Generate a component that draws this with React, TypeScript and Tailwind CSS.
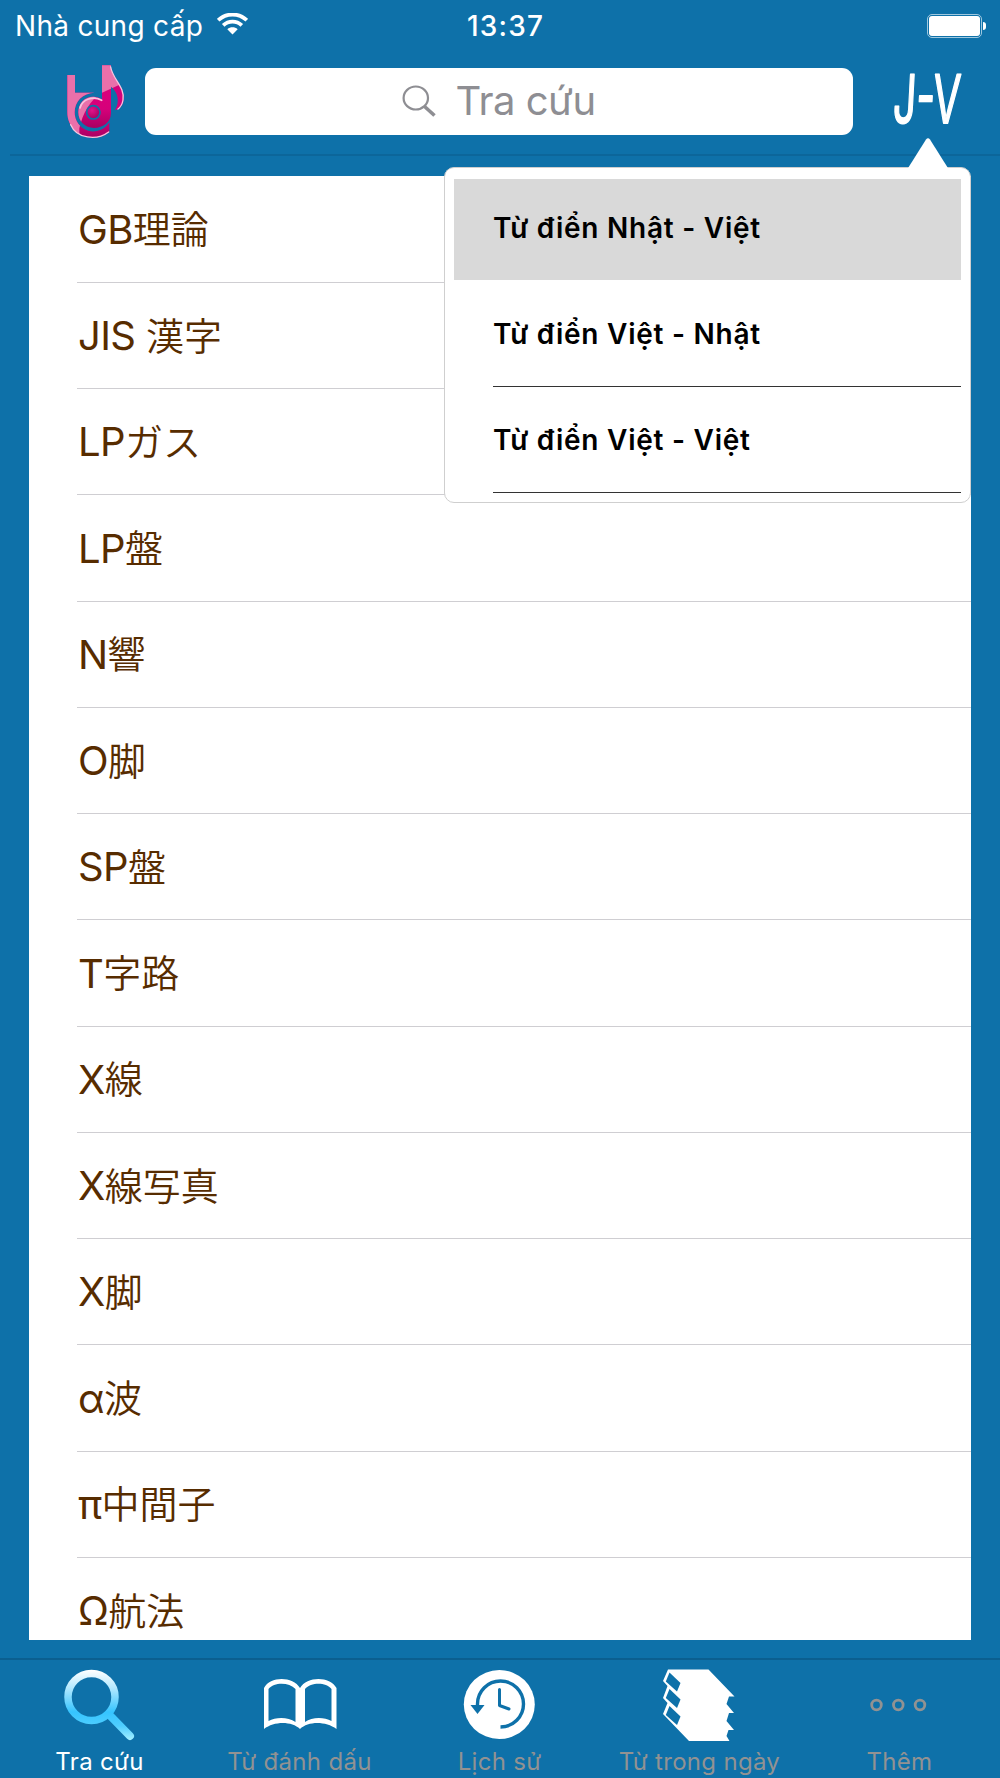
import type { ReactNode } from "react";

type Entry = { latin: string; kanji: string };

const entries: Entry[] = [
  { latin: "GB", kanji: "理論" },
  { latin: "JIS ", kanji: "漢字" },
  { latin: "LP", kanji: "ガス" },
  { latin: "LP", kanji: "盤" },
  { latin: "N", kanji: "響" },
  { latin: "O", kanji: "脚" },
  { latin: "SP", kanji: "盤" },
  { latin: "T", kanji: "字路" },
  { latin: "X", kanji: "線" },
  { latin: "X", kanji: "線写真" },
  { latin: "X", kanji: "脚" },
  { latin: "α", kanji: "波" },
  { latin: "π", kanji: "中間子" },
  { latin: "Ω", kanji: "航法" },
];

const dictionaries = [
  "Từ điển Nhật - Việt",
  "Từ điển Việt - Nhật",
  "Từ điển Việt - Việt",
];

function StatusBar() {
  return (
    <div className="flex h-[51px] items-center text-[28px] leading-none text-white">
      <div className="flex flex-1 items-center pl-[15px]">
        <span className="tracking-[0.3px]">Nhà cung cấp</span>
        <svg className="ml-[14px] -mt-1" width="31" height="22" viewBox="0 0 31 22" aria-hidden="true">
          <g fill="none" stroke="#fff" strokeWidth="3.8">
            <path d="M1.2 7.2C9.2-0.4 21.8-0.4 29.8 7.2" />
            <path d="M6.2 12.3C11.5 7.3 19.5 7.3 24.8 12.3" />
          </g>
          <path d="M15.5 21.5L10.3 16.2C13.3 13.7 17.7 13.7 20.7 16.2Z" fill="#fff" />
        </svg>
      </div>
      <span className="pl-[10px] font-[550] tracking-[1.2px]">13:37</span>
      <div className="flex flex-1 items-center justify-end pr-[14px]">
        <div className="h-[24px] w-[55px] rounded-[5px] border border-[#9fc8df] p-px">
          <div className="h-full rounded-[3px] bg-white" />
        </div>
        <div className="ml-px h-2 w-[3px] rounded-r-full bg-white" />
      </div>
    </div>
  );
}

function Logo() {
  return (
    <svg width="90" height="100" viewBox="0 0 270 300" aria-hidden="true">
      <defs>
        <linearGradient id="lower" x1="0" y1="0" x2="0" y2="1">
          <stop offset="0" stopColor="#e0007f" />
          <stop offset="0.7" stopColor="#d6007a" />
          <stop offset="1" stopColor="#a80062" />
        </linearGradient>
        <radialGradient id="ball" cx="0.4" cy="0.35" r="0.7">
          <stop offset="0" stopColor="#e0148a" />
          <stop offset="1" stopColor="#a3005f" />
        </radialGradient>
        <clipPath id="shine">
          <path d="M40 30H240V90L156 128C120 150 98 190 88 235L88 280H40Z" />
        </clipPath>
      </defs>
      <path d="M52 75H75V128H134C98 129 74 154 74 187A56 56 0 0 0 178 217V246C165 257 150 263 130 263C85 263 52 230 52 187Z" fill="url(#lower)" />
      <path d="M156 46H183V190C183 216 160 234 132 234C105 234 85 214 85 187C85 160 104 140 130 140C140 140 149 143 156 148Z" fill="url(#lower)" />
      <path d="M182 48C185 86 223 110 221 148C219 166 209 180 195 180C210 156 204 126 183 110Z" fill="#d3007a" />
      <g clipPath="url(#shine)" fill="#ea70aa">
        <path d="M52 75H75V128H134C98 129 74 154 74 187A56 56 0 0 0 178 217V246C165 257 150 263 130 263C85 263 52 230 52 187Z" />
        <path d="M156 46H183V190C183 216 160 234 132 234C105 234 85 214 85 187C85 160 104 140 130 140C140 140 149 143 156 148Z" />
        <path d="M182 48C185 86 223 110 221 148C219 166 209 180 195 180C210 156 204 126 183 110Z" />
      </g>
      <g fill="none" stroke="#f8c4de" strokeLinecap="round">
        <path d="M62 224C80 266 140 273 176 246" strokeWidth="4" />
        <path d="M90 174C97 147 130 137 155 151" strokeWidth="5" />
        <path d="M182 51C188 88 226 112 219 150C217 162 212 171 204 177" strokeWidth="4" />
      </g>
      <circle cx="130" cy="187" r="20" fill="url(#ball)" stroke="#0e71a9" strokeWidth="5" />
    </svg>
  );
}

function NavBar() {
  return (
    <div className="ml-[10px] flex h-[105px] border-b-2 border-[#0c669a]">
      <div className="-mt-px ml-10 w-[95px]">
        <Logo />
      </div>
      <div className="mt-[17px] flex h-[67px] w-[708px] items-center justify-center rounded-[11px] bg-white pb-px text-[#8e8e93]">
        <svg className="mr-[19px]" width="34" height="34" viewBox="0 0 34 34" fill="none" stroke="currentColor" aria-hidden="true">
          <ellipse cx="13.8" cy="14" rx="12.2" ry="11.5" strokeWidth="2.2" />
          <path d="M22 22L32.5 31.5" strokeWidth="3.6" />
        </svg>
        <span className="text-[40px] leading-none tracking-[-0.5px]">Tra cứu</span>
      </div>
      <svg className="ml-[30px] mt-[2px] overflow-visible" width="90" height="98" viewBox="0 0 90 98" aria-label="J-V">
        <text
          x="12"
          y="70"
          fill="#fff"
          stroke="#fff"
          strokeWidth="1.8"
          strokeLinejoin="round"
          fontSize="67"
          textLength="67"
          lengthAdjust="spacingAndGlyphs"
          transform="translate(1 0) skewX(-3)"
        >
          J-V
        </text>
      </svg>
    </div>
  );
}

function DictionaryMenu() {
  return (
    <div className="absolute -top-[9px] right-0 h-[336px] w-[527px] rounded-[10px] border border-[#cfcfcf] bg-white pl-[9px] pr-[9px] pt-[11px]">
      <svg className="absolute -top-[31px] right-[20px]" width="44" height="34" viewBox="0 0 44 34" aria-hidden="true">
        <path d="M0.500 33.5L20 2.5Q22 0 24 2.5L43.5 33.5Z" fill="#fff" />
      </svg>
      {dictionaries.map((name, i) => (
        <div key={name} className={i === 0 ? "mb-px h-[101px] bg-[#d9d9d9] pl-[39px]" : "h-[106px] pl-[39px]"}>
          <div className={i === 0 ? "h-full pt-[30px]" : "h-full border-b border-[#333] pt-[34px]"}>
            <span className="block text-[28px] font-semibold leading-[38px] tracking-[0.75px] text-black">{name}</span>
          </div>
        </div>
      ))}
    </div>
  );
}

function EntryList() {
  return (
    <div className="h-[1464px] overflow-hidden bg-white pl-12 pt-[0.7px]">
      {entries.map((entry) => (
        <div
          key={entry.latin + entry.kanji}
          className="flex h-[106.25px] items-center whitespace-pre border-b border-[#cfced2] pl-px pt-px text-[40px] leading-none tracking-[-0.6px] text-[#572c00]"
        >
          <span>{entry.latin}</span>
          <span className="pb-[5px] font-['Noto_Sans_CJK_JP',sans-serif] text-[38px] font-[350] tracking-normal">{entry.kanji}</span>
        </div>
      ))}
    </div>
  );
}

function SearchIcon() {
  return (
    <svg width="76" height="76" viewBox="0 0 76 76" fill="none" stroke="url(#glass)" aria-hidden="true">
      <defs>
        <linearGradient id="glass" gradientUnits="userSpaceOnUse" x1="0" y1="2" x2="0" y2="72">
          <stop offset="0" stopColor="#fff" />
          <stop offset="0.25" stopColor="#b5e9ff" />
          <stop offset="0.6" stopColor="#35c4ff" />
          <stop offset="0.8" stopColor="#4fceff" />
          <stop offset="1" stopColor="#a5f0ff" />
        </linearGradient>
      </defs>
      <circle cx="29.5" cy="29" r="23.5" strokeWidth="7.5" />
      <path d="M47 46.5L68 68" strokeWidth="8" strokeLinecap="round" />
    </svg>
  );
}

function BookIcon() {
  return (
    <svg width="76" height="76" viewBox="0 0 76 76" fill="#fff" fillRule="evenodd" aria-hidden="true">
      <path d="M2 20C8 8 31 8 38 20C45 8 68 8 74.5 20V61C64 53 46 53 38 61C30 53 12 53 2 61ZM6.500 21V53C14 49 26 49 33.5 54V21C27 14 12 14 6.5 21ZM43 21V54C50 49 62 49 69.5 53V21C64 14 49 14 43 21Z" />
    </svg>
  );
}

function HistoryIcon() {
  return (
    <svg width="76" height="76" viewBox="0 0 76 76" fill="none" stroke="#0e71a9" aria-hidden="true">
      <ellipse cx="37.3" cy="36.5" rx="35.5" ry="34.5" fill="#fff" stroke="none" />
      <path d="M38.5 59A23 23 0 1 0 15.5 36V40" strokeWidth="3.4" />
      <path d="M8.5 37H22.5L15.5 46Z" fill="#0e71a9" stroke="none" />
      <path d="M37.5 21.5V37.5L47 41" strokeWidth="3" strokeLinecap="round" strokeLinejoin="round" />
    </svg>
  );
}

function StackIcon() {
  return (
    <svg className="mr-[3px]" width="76" height="76" viewBox="0 0 76 76" aria-hidden="true">
      <path d="M7 1.5H47.5L73.5 28.5H68L65.5 36L73 45H68L65.5 53L73 62H67.5L65.5 68L68.5 73H28L2 46L6.5 35L2 30L6.5 18L2 13Z" fill="#fff" />
      <g fill="#0e71a9">
        <path d="M8.5 4.5L19.5 15L16 23.5L4.8 13.5Z" />
        <path d="M8.5 21L19.5 31.5L16 40L4.8 30Z" />
        <path d="M8.5 38L19.5 48.5L16 57L4.8 47Z" />
      </g>
    </svg>
  );
}

function MoreIcon() {
  return (
    <svg width="76" height="76" viewBox="0 0 76 76" fill="none" stroke="#929292" strokeWidth="2.8" aria-hidden="true">
      <circle cx="14.5" cy="37" r="4.8" />
      <circle cx="36.3" cy="37" r="4.8" />
      <circle cx="58" cy="37" r="4.8" />
    </svg>
  );
}

const tabs: { label: string; icon: ReactNode; active?: boolean }[] = [
  { label: "Tra cứu", icon: <SearchIcon />, active: true },
  { label: "Từ đánh dấu", icon: <BookIcon /> },
  { label: "Lịch sử", icon: <HistoryIcon /> },
  { label: "Từ trong ngày", icon: <StackIcon /> },
  { label: "Thêm", icon: <MoreIcon /> },
];

function TabBar() {
  return (
    <div className="mt-[18px] grid h-[120px] grid-cols-5 border-t-2 border-[#0b5f90]">
      {tabs.map((tab) => (
        <div key={tab.label} className="flex flex-col items-center pt-2">
          {tab.icon}
          <span
            className={
              tab.active
                ? "mt-1 pr-px text-2xl leading-7 tracking-[0.3px] text-white"
                : "mt-1 pr-px text-2xl leading-7 tracking-[0.3px] text-[#929292]"
            }
          >
            {tab.label}
          </span>
        </div>
      ))}
    </div>
  );
}

export default function App() {
  return (
    <div className="h-[1778px] w-[1000px] overflow-hidden bg-[#0e71a9] font-['Inter','Noto_Sans_CJK_JP',sans-serif]">
      <StatusBar />
      <NavBar />
      <div className="relative mx-[29px] mt-5">
        <EntryList />
        <DictionaryMenu />
      </div>
      <TabBar />
    </div>
  );
}
